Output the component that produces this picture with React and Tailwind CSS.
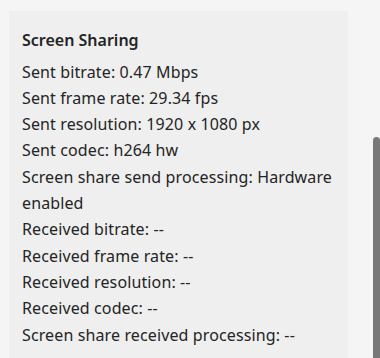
const SENT = [
  'Sent bitrate: 0.47 Mbps',
  'Sent frame rate: 29.34 fps',
  'Sent resolution: 1920 x 1080 px',
  'Sent codec: h264 hw',
  'Screen share send processing: Hardware enabled',
]

const RECEIVED = [
  'Received bitrate: --',
  'Received frame rate: --',
  'Received resolution: --',
  'Received codec: --',
  'Screen share received processing: --',
]

export default function App() {
  return (
    <div className="flex h-[358px] overflow-hidden bg-[#f5f5f5] font-['Noto_Sans',sans-serif] text-[#242424]">
      <div className="flex-1 pl-[9px] pt-[11px]">
        {/* Stats card */}
        <div className="w-[339px] bg-[#efefef] pl-[13px] pr-3 pt-[17px] pb-6">
          <h3 className="mb-[5px] text-[16px] font-semibold leading-[25.6px]">Screen Sharing</h3>
          <div className="text-[16px] leading-[26.3px] tracking-[0.12px]">
            {SENT.map((line) => (
              <p key={line}>{line}</p>
            ))}
            {RECEIVED.map((line) => (
              <p key={line}>{line}</p>
            ))}
          </div>
        </div>
      </div>
      {/* Scrollbar */}
      <div className="flex w-[7px] flex-col pt-[137px]">
        <div className="flex-1 rounded-t-[4px] bg-[#787878]" />
      </div>
    </div>
  )
}
